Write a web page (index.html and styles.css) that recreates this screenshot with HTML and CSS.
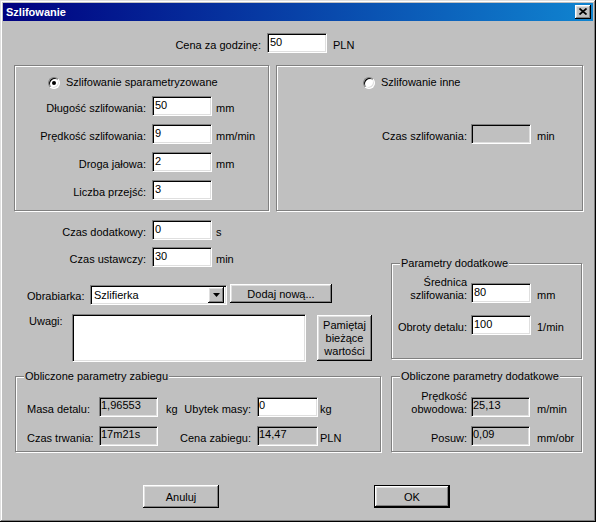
FILE: index.html
```html
<!DOCTYPE html>
<html lang="pl">

<head>
    <meta charset="UTF-8">
    <meta name="viewport" content="width=device-width, initial-scale=1.0">
    <title>Szlifowanie</title>
    <link rel="stylesheet" href="styles.css">
</head>

<body>
    <div class="window">
        <div class="titlebar">
            <span class="title">Szlifowanie</span>
            <button class="close-btn raised" title="Zamknij">
                <svg width="8" height="7" viewBox="0 0 8 7">
                    <path d="M0.5 0.5L7.5 6.5M7.5 0.5L0.5 6.5" stroke="#000" stroke-width="1.7" fill="none" />
                </svg>
            </button>
        </div>

        <div class="dialog">
            <!-- Cena za godzinę -->
            <div class="rate-row">
                <label class="lbl rate-lbl">Cena za godzinę:</label>
                <input class="field" type="text" value="50">
                <span class="unit rate-unit">PLN</span>
            </div>

            <!-- Tryby szlifowania -->
            <div class="modes">
                <div class="group mode-param">
                    <div class="radio-line"><span class="radio checked"></span>Szlifowanie sparametryzowane</div>
                    <div class="param-rows">
                        <div class="frow">
                            <label class="lbl">Długość szlifowania:</label>
                            <input class="field" type="text" value="50">
                            <span class="unit">mm</span>
                        </div>
                        <div class="frow">
                            <label class="lbl">Prędkość szlifowania:</label>
                            <input class="field" type="text" value="9">
                            <span class="unit">mm/min</span>
                        </div>
                        <div class="frow">
                            <label class="lbl">Droga jałowa:</label>
                            <input class="field" type="text" value="2">
                            <span class="unit">mm</span>
                        </div>
                        <div class="frow">
                            <label class="lbl">Liczba przejść:</label>
                            <input class="field" type="text" value="3">
                        </div>
                    </div>
                </div>

                <div class="group mode-other">
                    <div class="radio-line"><span class="radio"></span>Szlifowanie inne</div>
                    <div class="frow other-row">
                        <label class="lbl">Czas szlifowania:</label>
                        <input class="field" type="text" disabled>
                        <span class="unit">min</span>
                    </div>
                </div>
            </div>

            <!-- Czasy, obrabiarka, uwagi -->
            <div class="middle">
                <div class="middle-left">
                    <div class="frow">
                        <label class="lbl">Czas dodatkowy:</label>
                        <input class="field" type="text" value="0">
                        <span class="unit">s</span>
                    </div>
                    <div class="frow setup-row">
                        <label class="lbl">Czas ustawczy:</label>
                        <input class="field" type="text" value="30">
                        <span class="unit">min</span>
                    </div>
                    <div class="machine-row">
                        <label class="machine-lbl">Obrabiarka:</label>
                        <div class="combo">
                            <span class="combo-text">Szlifierka</span>
                            <span class="combo-btn raised">
                                <svg width="7" height="4" viewBox="0 0 7 4"><polygon points="0,0 7,0 3.5,4" fill="#000" /></svg>
                            </span>
                        </div>
                        <button class="btn add-btn raised">Dodaj nową...</button>
                    </div>
                    <div class="notes-row">
                        <label class="notes-lbl">Uwagi:</label>
                        <textarea class="field notes"></textarea>
                        <button class="btn remember-btn raised">Pamiętaj bieżące wartości</button>
                    </div>
                </div>

                <div class="group extra">
                    <span class="caption">Parametry dodatkowe</span>
                    <div class="frow">
                        <label class="lbl two-line">Średnica szlifowania:</label>
                        <input class="field" type="text" value="80">
                        <span class="unit">mm</span>
                    </div>
                    <div class="frow extra-row2">
                        <label class="lbl">Obroty detalu:</label>
                        <input class="field" type="text" value="100">
                        <span class="unit">1/min</span>
                    </div>
                </div>
            </div>

            <!-- Wyniki -->
            <div class="results">
                <div class="group results-main">
                    <span class="caption">Obliczone parametry zabiegu</span>
                    <div class="rrow">
                        <label class="r-lbl1">Masa detalu:</label>
                        <input class="field ro r-f1" type="text" value="1,96553" readonly>
                        <span class="r-unit1">kg</span>
                        <label class="r-lbl2">Ubytek masy:</label>
                        <input class="field r-f2 r-edit" type="text" value="0">
                        <span class="r-unit2">kg</span>
                    </div>
                    <div class="rrow rrow2">
                        <label class="r-lbl1">Czas trwania:</label>
                        <input class="field ro r-f1" type="text" value="17m21s" readonly>
                        <span class="r-unit1"></span>
                        <label class="r-lbl2">Cena zabiegu:</label>
                        <input class="field ro r-f2" type="text" value="14,47" readonly>
                        <span class="r-unit2">PLN</span>
                    </div>
                </div>

                <div class="group results-extra">
                    <span class="caption">Obliczone parametry dodatkowe</span>
                    <div class="frow rx-row">
                        <label class="lbl two-line">Prędkość obwodowa:</label>
                        <input class="field ro" type="text" value="25,13" readonly>
                        <span class="unit">m/min</span>
                    </div>
                    <div class="frow rx-row rrow2">
                        <label class="lbl">Posuw:</label>
                        <input class="field ro" type="text" value="0,09" readonly>
                        <span class="unit">mm/obr</span>
                    </div>
                </div>
            </div>

            <div class="actions">
                <button class="btn action-btn raised">Anuluj</button>
                <button class="btn action-btn ok-btn raised">OK</button>
            </div>
        </div>
    </div>
</body>

</html>
```

FILE: styles.css
```css
* {
    box-sizing: border-box;
}

body {
    margin: 0;
    background-color: #c0c0c0;
    font-family: "Liberation Sans", Arial, sans-serif;
    font-size: 11px;
    color: #000;
}

label {
    line-height: 13px;
    white-space: nowrap;
}

/* Ramka okna */
.window {
    width: 596px;
    height: 522px;
    padding: 3px;
    background-color: #c0c0c0;
    box-shadow: inset -1px -1px #000, inset 1px 1px #dfdfdf, inset -2px -2px #808080, inset 2px 2px #fff;
    display: flex;
    flex-direction: column;
}

.titlebar {
    height: 18px;
    flex-shrink: 0;
    background: linear-gradient(to right, #000080, #1084d0);
    display: flex;
    align-items: center;
    justify-content: space-between;
    padding: 0 2px 0 3px;
}

.title {
    color: #fff;
    font-weight: bold;
    font-size: 11px;
}

.raised {
    background-color: #c0c0c0;
    border: none;
    box-shadow: inset -1px -1px #000, inset 1px 1px #fff, inset -2px -2px #808080, inset 2px 2px #dfdfdf;
}

.close-btn {
    width: 16px;
    height: 14px;
    padding: 0 0 1px 0;
    display: flex;
    align-items: center;
    justify-content: center;
}

/* Pola tekstowe */
.field {
    width: 60px;
    height: 20px;
    margin: 0;
    padding: 0 2px 3px 2px;
    font-family: inherit;
    font-size: 11px;
    line-height: 13px;
    color: #000;
    background-color: #fff;
    border: 1px solid;
    border-color: #808080 #fff #fff #808080;
    box-shadow: inset 1px 1px #000, inset -1px -1px #dfdfdf;
    outline: none;
}

.field:disabled,
.field.ro {
    background-color: #c0c0c0;
}

.lbl {
    text-align: right;
    padding-bottom: 1px;
}

.lbl.two-line {
    white-space: normal;
}

.unit {
    line-height: 13px;
    padding-bottom: 1px;
}

.frow {
    display: flex;
    align-items: flex-end;
    height: 20px;
}

/* Cena za godzinę */
.rate-row {
    display: flex;
    align-items: flex-end;
    height: 20px;
    margin-top: 12px;
}

.rate-lbl {
    width: 120px;
    margin-left: 138px;
    margin-right: 6px;
}

.rate-unit {
    margin-left: 6px;
}

/* Grupy */
.group {
    border: 1px solid #808080;
    box-shadow: inset 1px 1px #fff, 1px 1px #fff;
    position: relative;
}

.caption {
    position: absolute;
    top: -7px;
    left: 8px;
    padding: 0 1px;
    line-height: 13px;
    white-space: nowrap;
    background-color: #c0c0c0;
}

.modes {
    display: flex;
    margin-top: 12px;
}

.mode-param {
    width: 255px;
    height: 146px;
    margin-left: 11px;
    padding-top: 10px;
}

.mode-other {
    width: 307px;
    height: 146px;
    margin-left: 7px;
    padding-top: 10px;
}

.radio-line {
    display: flex;
    align-items: center;
    height: 13px;
    line-height: 13px;
}

.mode-param .radio-line {
    padding-left: 33px;
}

.mode-other .radio-line {
    padding-left: 86px;
}

.radio {
    width: 12px;
    height: 12px;
    margin-right: 6px;
    border-radius: 50%;
    border: 1px solid;
    border-color: #808080 #fff #fff #808080;
    box-shadow: inset 1px 1px #000, inset -1px -1px #dfdfdf;
    background-color: #fff;
    display: flex;
    align-items: center;
    justify-content: center;
}

.radio.checked::after {
    content: "";
    width: 4px;
    height: 4px;
    border-radius: 50%;
    background-color: #000;
}

.param-rows {
    display: flex;
    flex-direction: column;
    gap: 8px;
    margin-top: 7px;
}

.param-rows .lbl {
    width: 131px;
    margin-right: 6px;
}

.param-rows .unit {
    margin-left: 4px;
}

.other-row {
    margin-top: 35px;
}

.other-row .lbl {
    width: 190px;
    margin-right: 4px;
}

.other-row .unit {
    margin-left: 6px;
}

/* Środkowa część */
.middle {
    display: flex;
    height: 165px;
}

.middle-left {
    width: 377px;
    padding-top: 9px;
}

.middle-left .lbl {
    width: 143px;
    margin-right: 6px;
}

.middle-left .unit {
    margin-left: 4px;
}

.setup-row {
    margin-top: 7px;
}

.machine-row {
    display: flex;
    align-items: flex-start;
    margin-top: 17px;
}

.machine-lbl {
    width: 63px;
    margin-left: 24px;
    padding-top: 6px;
}

.combo {
    width: 137px;
    height: 20px;
    margin-top: 1px;
    display: flex;
    align-items: center;
    justify-content: space-between;
    padding: 2px 2px 2px 3px;
    background-color: #fff;
    border: 1px solid;
    border-color: #808080 #fff #fff #808080;
    box-shadow: inset 1px 1px #000, inset -1px -1px #dfdfdf;
}

.combo-text {
    line-height: 13px;
}

.combo-btn {
    width: 16px;
    height: 16px;
    display: flex;
    align-items: center;
    justify-content: center;
}

.btn {
    font-family: inherit;
    font-size: 11px;
    color: #000;
    padding: 0;
    cursor: pointer;
}

.add-btn {
    width: 102px;
    height: 19px;
    margin-left: 3px;
}

.notes-row {
    display: flex;
    align-items: flex-start;
    margin-top: 9px;
}

.notes-lbl {
    width: 43px;
    margin-left: 26px;
    padding-top: 1px;
}

.notes {
    width: 234px;
    height: 48px;
    resize: none;
    padding: 2px 3px;
}

.remember-btn {
    width: 55px;
    height: 46px;
    margin-left: 11px;
    margin-top: 1px;
    line-height: 13px;
}

.extra {
    width: 191px;
    height: 96px;
    margin-left: 11px;
    margin-top: 52px;
    padding-top: 19px;
}

.extra .lbl,
.results-extra .lbl {
    width: 75px;
    margin-right: 4px;
}

.extra .unit {
    margin-left: 6px;
}

.extra-row2 {
    margin-top: 12px;
}

/* Wyniki */
.results {
    display: flex;
}

.results-main {
    width: 366px;
    height: 76px;
    margin-left: 12px;
    padding-top: 20px;
}

.results-extra {
    width: 191px;
    height: 76px;
    margin-left: 10px;
    padding-top: 20px;
}

.field.ro,
.field.r-edit {
    padding: 0 2px 5px 1px;
}

.rrow {
    display: flex;
    align-items: flex-end;
    height: 20px;
    padding-left: 11px;
}

.rrow2 {
    margin-top: 9px;
}

.rrow label,
.rrow span {
    line-height: 13px;
    padding-bottom: 1px;
}

.r-lbl1 {
    width: 72px;
}

.r-f1 {
    width: 59px;
}

.r-unit1 {
    width: 11px;
    margin-left: 8px;
}

.r-lbl2 {
    width: 74px;
    margin-right: 6px;
    text-align: right;
}

.r-f2 {
    width: 61px;
}

.r-unit2 {
    margin-left: 2px;
}

.results-extra .field {
    width: 59px;
}

.results-extra .unit {
    margin-left: 7px;
}

/* Przyciski */
.actions {
    display: flex;
    margin-top: 33px;
}

.action-btn {
    width: 76px;
    height: 23px;
    margin-left: 140px;
}

.ok-btn {
    margin-left: 155px;
    border: 1px solid #000;
}
```
